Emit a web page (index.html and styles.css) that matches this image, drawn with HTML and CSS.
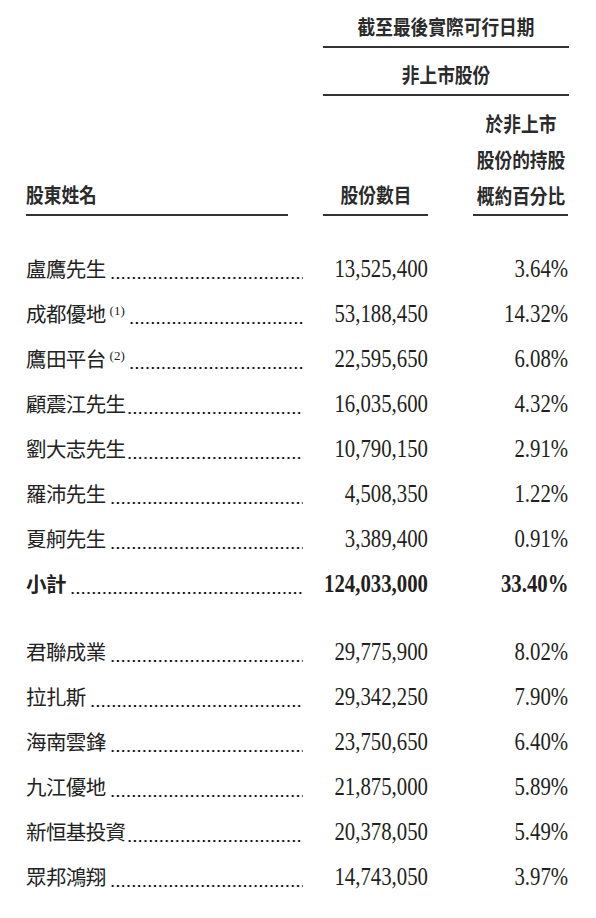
FILE: index.html
```html
<!DOCTYPE html>
<html lang="zh-Hant">
<head>
  <meta charset="UTF-8">
  <meta name="viewport" content="width=device-width, initial-scale=1.0">
  <title>股東持股</title>
  <link rel="stylesheet" href="styles.css">
</head>
<body>

<div class="sheet">
  <div class="head-span">
    <div class="span-top"><span class="hz">截至最後實際可行日期</span></div>
    <div class="span-sub"><span class="hz">非上市股份</span></div>
  </div>

  <div class="head-cols">
    <div class="hc hc-name"><span class="hz left">股東姓名</span></div>
    <div class="hc hc-num"><span class="hz">股份數目</span></div>
    <div class="hc hc-pct">
      <span class="hz line">於非上市</span>
      <span class="hz line">股份的持股</span>
      <span class="hz line">概約百分比</span>
    </div>
  </div>

  <div class="rows">
    <div class="row first">
      <div class="name"><span class="nm">盧鷹先生</span><span class="dots"></span></div>
      <div class="num"><span class="fig">13,525,400</span></div>
      <div class="pct"><span class="fig">3.64%</span></div>
    </div>
    <div class="row">
      <div class="name"><span class="nm">成都優地</span><span class="note">(1)</span><span class="dots"></span></div>
      <div class="num"><span class="fig">53,188,450</span></div>
      <div class="pct"><span class="fig">14.32%</span></div>
    </div>
    <div class="row">
      <div class="name"><span class="nm">鷹田平台</span><span class="note">(2)</span><span class="dots"></span></div>
      <div class="num"><span class="fig">22,595,650</span></div>
      <div class="pct"><span class="fig">6.08%</span></div>
    </div>
    <div class="row">
      <div class="name"><span class="nm">顧震江先生</span><span class="dots tight"></span></div>
      <div class="num"><span class="fig">16,035,600</span></div>
      <div class="pct"><span class="fig">4.32%</span></div>
    </div>
    <div class="row">
      <div class="name"><span class="nm">劉大志先生</span><span class="dots tight"></span></div>
      <div class="num"><span class="fig">10,790,150</span></div>
      <div class="pct"><span class="fig">2.91%</span></div>
    </div>
    <div class="row">
      <div class="name"><span class="nm">羅沛先生</span><span class="dots"></span></div>
      <div class="num"><span class="fig">4,508,350</span></div>
      <div class="pct"><span class="fig">1.22%</span></div>
    </div>
    <div class="row">
      <div class="name"><span class="nm">夏舸先生</span><span class="dots"></span></div>
      <div class="num"><span class="fig">3,389,400</span></div>
      <div class="pct"><span class="fig">0.91%</span></div>
    </div>
    <div class="row total">
      <div class="name"><span class="nm">小計</span><span class="dots"></span></div>
      <div class="num"><span class="fig">124,033,000</span></div>
      <div class="pct"><span class="fig">33.40%</span></div>
    </div>

    <div class="row group-start">
      <div class="name"><span class="nm">君聯成業</span><span class="dots"></span></div>
      <div class="num"><span class="fig">29,775,900</span></div>
      <div class="pct"><span class="fig">8.02%</span></div>
    </div>
    <div class="row">
      <div class="name"><span class="nm">拉扎斯</span><span class="dots"></span></div>
      <div class="num"><span class="fig">29,342,250</span></div>
      <div class="pct"><span class="fig">7.90%</span></div>
    </div>
    <div class="row">
      <div class="name"><span class="nm">海南雲鋒</span><span class="dots"></span></div>
      <div class="num"><span class="fig">23,750,650</span></div>
      <div class="pct"><span class="fig">6.40%</span></div>
    </div>
    <div class="row">
      <div class="name"><span class="nm">九江優地</span><span class="dots"></span></div>
      <div class="num"><span class="fig">21,875,000</span></div>
      <div class="pct"><span class="fig">5.89%</span></div>
    </div>
    <div class="row">
      <div class="name"><span class="nm">新恒基投資</span><span class="dots tight"></span></div>
      <div class="num"><span class="fig">20,378,050</span></div>
      <div class="pct"><span class="fig">5.49%</span></div>
    </div>
    <div class="row">
      <div class="name"><span class="nm">眾邦鴻翔</span><span class="dots"></span></div>
      <div class="num"><span class="fig">14,743,050</span></div>
      <div class="pct"><span class="fig">3.97%</span></div>
    </div>
  </div>
</div>

</body>
</html>
```

FILE: styles.css
```css
body {
  margin: 0;
  background-color: #fff;
  color: #231f20;
  font-family: "Noto Sans CJK TC", "Noto Sans", sans-serif;
}
.sheet {
  width: 542px;
  padding: 9px 0 0 26px;
}

/* header */
.hz {
  display: inline-block;
  font-size: 20px;
  font-weight: 700;
  color: #2b2b2b;
  white-space: nowrap;
  transform: scaleX(0.885);
}
.hz.left {
  transform-origin: left center;
}
.hz.line {
  display: block;
  line-height: 36px;
}
.head-span {
  margin-left: 297px;
  width: 246px;
  text-align: center;
}
.span-top {
  line-height: 36px;
  border-bottom: 2px solid #333;
}
.span-sub {
  padding-top: 9px;
  line-height: 36px;
  border-bottom: 2px solid #333;
}
.head-cols {
  display: flex;
  align-items: flex-end;
  margin-top: 10px;
}
.hc {
  line-height: 36px;
  border-bottom: 2px solid #333;
  text-align: center;
}
.hc-name {
  width: 262px;
  text-align: left;
}
.hc-num {
  width: 105px;
  margin-left: 35px;
}
.hc-pct {
  width: 95px;
  margin-left: 45px;
  display: flex;
  flex-direction: column;
  align-items: center;
}

/* body rows */
.rows {
  margin-top: 30px;
}
.row {
  display: grid;
  grid-template-columns: 277px 125px 140px;
  align-items: baseline;
  height: 45px;
  line-height: 45px;
}
.row.group-start {
  margin-top: 23px;
}
.name {
  display: flex;
  align-items: baseline;
}
.nm {
  font-size: 20.5px;
  color: #222;
  letter-spacing: -0.6px;
}
.note {
  font-family: "Liberation Serif", serif;
  font-size: 13px;
  position: relative;
  top: -7px;
  margin-left: 4px;
}
.dots {
  flex: 1;
  align-self: stretch;
  margin-left: 4px;
  background-image: radial-gradient(circle, #1a1a1a 1.1px, transparent 1.5px);
  background-size: 5.3px 4px;
  background-repeat: repeat-x;
  background-position: 0 30px;
}
.dots.tight {
  margin-left: 1px;
}
.num, .pct {
  display: flex;
  justify-content: flex-end;
}
.fig {
  display: inline-block;
  font-family: "Liberation Serif", serif;
  font-size: 26px;
  white-space: nowrap;
  transform: scaleX(0.8);
  transform-origin: right center;
}
.total .nm {
  font-weight: 700;
}
.total .fig {
  font-weight: 700;
}
```
